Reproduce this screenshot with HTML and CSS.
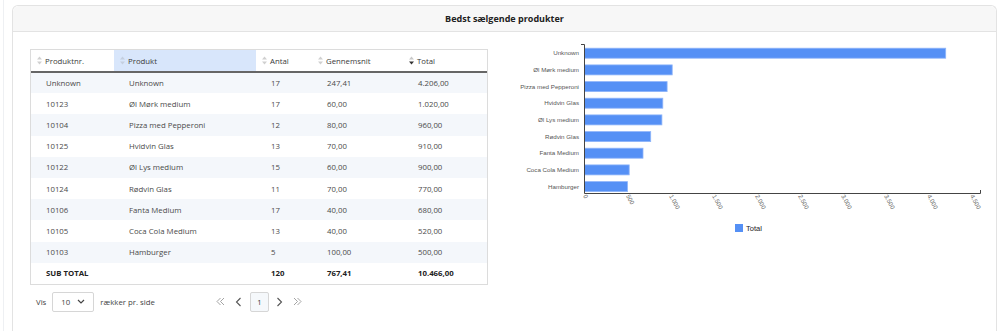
FILE: index.html
```html
<!DOCTYPE html>
<html lang="da">
<head>
<meta charset="utf-8">
<title>Bedst sælgende produkter</title>
<link rel="stylesheet" href="styles.css">
</head>
<body>
<div class="page">
  <div class="card">
    <div class="card-header">Bedst sælgende produkter</div>
    <div class="card-body">
      <div class="table-col">
        <div class="table-wrap">
          <table class="grid">
            <colgroup>
              <col class="c1"><col class="c2"><col class="c3"><col class="c4"><col class="c5">
            </colgroup>
            <thead>
              <tr>
                <th><span class="sort"><svg width="5" height="9" viewBox="0 0 5 9"><path d="M2.5 0.5 L5 3.5 L0 3.5Z" fill="#d0d0d0"/><path d="M0 5.5 L5 5.5 L2.5 8.5Z" fill="#d0d0d0"/></svg></span>Produktnr.</th>
                <th class="active"><span class="sort"><svg width="5" height="9" viewBox="0 0 5 9"><path d="M2.5 0.5 L5 3.5 L0 3.5Z" fill="#c4cfdf"/><path d="M0 5.5 L5 5.5 L2.5 8.5Z" fill="#c4cfdf"/></svg></span>Produkt</th>
                <th><span class="sort"><svg width="5" height="9" viewBox="0 0 5 9"><path d="M2.5 0.5 L5 3.5 L0 3.5Z" fill="#d0d0d0"/><path d="M0 5.5 L5 5.5 L2.5 8.5Z" fill="#d0d0d0"/></svg></span>Antal</th>
                <th><span class="sort"><svg width="5" height="9" viewBox="0 0 5 9"><path d="M2.5 0.5 L5 3.5 L0 3.5Z" fill="#d0d0d0"/><path d="M0 5.5 L5 5.5 L2.5 8.5Z" fill="#d0d0d0"/></svg></span>Gennemsnit</th>
                <th><span class="sort"><svg width="5" height="9" viewBox="0 0 5 9"><path d="M2.5 0.5 L5 3.5 L0 3.5Z" fill="#c8c8c8"/><path d="M0 5.5 L5 5.5 L2.5 8.5Z" fill="#333"/></svg></span>Total</th>
              </tr>
            </thead>
            <tbody>
              <tr class="odd"><td>Unknown</td><td>Unknown</td><td>17</td><td>247,41</td><td>4.206,00</td></tr>
              <tr><td>10123</td><td>Øl Mørk medium</td><td>17</td><td>60,00</td><td>1.020,00</td></tr>
              <tr class="odd"><td>10104</td><td>Pizza med Pepperoni</td><td>12</td><td>80,00</td><td>960,00</td></tr>
              <tr><td>10125</td><td>Hvidvin Glas</td><td>13</td><td>70,00</td><td>910,00</td></tr>
              <tr class="odd"><td>10122</td><td>Øl Lys medium</td><td>15</td><td>60,00</td><td>900,00</td></tr>
              <tr><td>10124</td><td>Rødvin Glas</td><td>11</td><td>70,00</td><td>770,00</td></tr>
              <tr class="odd"><td>10106</td><td>Fanta Medium</td><td>17</td><td>40,00</td><td>680,00</td></tr>
              <tr><td>10105</td><td>Coca Cola Medium</td><td>13</td><td>40,00</td><td>520,00</td></tr>
              <tr class="odd"><td>10103</td><td>Hamburger</td><td>5</td><td>100,00</td><td>500,00</td></tr>
            </tbody>
            <tfoot>
              <tr><td>SUB TOTAL</td><td></td><td>120</td><td>767,41</td><td>10.466,00</td></tr>
            </tfoot>
          </table>
        </div>
        <div class="pager-row">
          <span class="lbl">Vis</span>
          <div class="select"><span>10</span><svg width="8" height="5" viewBox="0 0 8 5"><path d="M1 1 L4 4 L7 1" fill="none" stroke="#444" stroke-width="1.2"/></svg></div>
          <span class="lbl">rækker pr. side</span>
          <div class="pager">
            <span class="pg"><svg width="9" height="9" viewBox="0 0 9 9"><path d="M4.5 1 L1 4.5 L4.5 8 M8 1 L4.5 4.5 L8 8" fill="none" stroke="#999" stroke-width="0.9"/></svg></span>
            <span class="pg"><svg width="7" height="10" viewBox="0 0 7 10"><path d="M5.5 1 L1.5 5 L5.5 9" fill="none" stroke="#555" stroke-width="1.1"/></svg></span>
            <span class="page-num">1</span>
            <span class="pg"><svg width="7" height="10" viewBox="0 0 7 10"><path d="M1.5 1 L5.5 5 L1.5 9" fill="none" stroke="#555" stroke-width="1.1"/></svg></span>
            <span class="pg"><svg width="9" height="9" viewBox="0 0 9 9"><path d="M1 1 L4.5 4.5 L1 8 M4.5 1 L8 4.5 L4.5 8" fill="none" stroke="#999" stroke-width="0.9"/></svg></span>
          </div>
        </div>
      </div>
      <div class="chart-col">
        <svg class="chart" width="490" height="200" viewBox="500 49 490 200">
          <g class="bars" fill="#5590f5" stroke="#8fb5f9" stroke-width="0.8">
            <rect x="584.5" y="48.2" width="361.2" height="10"/>
            <rect x="584.5" y="64.9" width="87.7" height="10"/>
            <rect x="584.5" y="81.6" width="82.6" height="10"/>
            <rect x="584.5" y="98.2" width="78.3" height="10"/>
            <rect x="584.5" y="114.9" width="77.4" height="10"/>
            <rect x="584.5" y="131.6" width="66.2" height="10"/>
            <rect x="584.5" y="148.2" width="58.5" height="10"/>
            <rect x="584.5" y="164.9" width="44.7" height="10"/>
            <rect x="584.5" y="181.6" width="43" height="10"/>
          </g>
          <g class="ylabels" text-anchor="end">
            <text x="579" y="55.4">Unknown</text>
            <text x="579" y="72.1">Øl Mørk medium</text>
            <text x="579" y="88.8">Pizza med Pepperoni</text>
            <text x="579" y="105.4">Hvidvin Glas</text>
            <text x="579" y="122.1">Øl Lys medium</text>
            <text x="579" y="138.8">Rødvin Glas</text>
            <text x="579" y="155.4">Fanta Medium</text>
            <text x="579" y="172.1">Coca Cola Medium</text>
            <text x="579" y="188.8">Hamburger</text>
          </g>
          <g stroke="#444" stroke-width="1" fill="none">
            <path d="M581 44.5 H584.5 V193.5 H980.5 V190"/>
          </g>
          <g class="xlabels">
            <text x="583" y="196" transform="rotate(62 583 196)">0</text>
            <text x="626" y="196" transform="rotate(62 626 196)">500</text>
            <text x="669" y="196" transform="rotate(62 669 196)">1.000</text>
            <text x="712" y="196" transform="rotate(62 712 196)">1.500</text>
            <text x="755" y="196" transform="rotate(62 755 196)">2.000</text>
            <text x="798" y="196" transform="rotate(62 798 196)">2.500</text>
            <text x="841" y="196" transform="rotate(62 841 196)">3.000</text>
            <text x="884" y="196" transform="rotate(62 884 196)">3.500</text>
            <text x="927" y="196" transform="rotate(62 927 196)">4.000</text>
            <text x="970" y="196" transform="rotate(62 970 196)">4.500</text>
          </g>
          <rect x="735" y="224" width="8" height="8" fill="#5590f5"/>
          <text class="legend" x="746" y="231">Total</text>
        </svg>
      </div>
    </div>
  </div>
</div>
</body>
</html>
```

FILE: styles.css
```css
* { box-sizing: border-box; }

html, body {
  margin: 0;
  padding: 0;
  background: #fff;
}

body {
  font-family: "Open Sans", "Noto Sans", "Liberation Sans", sans-serif;
  color: #444;
  overflow: hidden;
}

.page {
  margin-left: 3px;
  border-left: 1px solid #eef0f3;
  height: 331px;
  padding: 5px 7px 0 8px;
}

.card {
  border: 1px solid #e3e3e3;
  border-bottom: 0;
  border-radius: 6px 6px 0 0;
  height: 326px;
  background: #fff;
}

.card-header {
  height: 26px;
  background: #f7f7f7;
  border-bottom: 1px solid #e3e3e3;
  border-radius: 6px 6px 0 0;
  display: flex;
  align-items: center;
  justify-content: center;
  font-weight: 700;
  font-size: 9px;
  color: #222;
}

.card-body {
  display: flex;
  gap: 12px;
  padding: 17px 0 0 17px;
}

.table-col {
  width: 458px;
  flex: none;
}

.table-wrap {
  border: 1px solid #dcdcdc;
}

.grid {
  width: 456px;
  border-collapse: collapse;
  table-layout: fixed;
  font-size: 7.8px;
}

.c1 { width: 83px; }
.c2 { width: 142px; }
.c3 { width: 56px; }
.c4 { width: 91px; }
.c5 { width: 84px; }

.grid th {
  height: 22px;
  text-align: left;
  font-weight: 400;
  color: #3a3a3a;
  padding: 0 0 0 6px;
  border-bottom: 2px solid #666;
  white-space: nowrap;
}

.grid th.active {
  background: #d8e6fb;
}

.sort {
  display: inline-block;
  width: 5px;
  margin-right: 3px;
  vertical-align: -1px;
}

.sort svg { display: block; }

.grid td {
  height: 21.2px;
  padding: 0 0 0 15px;
  color: #4a4a4a;
  white-space: nowrap;
}

.grid tr.odd td {
  background: #f4f7fb;
}

.grid tfoot td {
  font-weight: 700;
  color: #222;
}

.pager-row {
  display: flex;
  align-items: center;
  margin-top: 7px;
  padding-left: 6px;
  font-size: 7.8px;
  color: #444;
}

.lbl { white-space: nowrap; }

.select {
  display: flex;
  align-items: center;
  justify-content: space-between;
  width: 42px;
  height: 20px;
  margin: 0 6px;
  padding: 0 8px 0 8px;
  border: 1px solid #d6d6d6;
  border-radius: 2px;
  background: #fff;
}

.select svg { display: block; }

.pager {
  display: flex;
  align-items: center;
  margin-left: 57px;
}

.pg {
  display: flex;
  align-items: center;
  justify-content: center;
  width: 18px;
  height: 20px;
}

.pg svg { display: block; }

.page-num {
  display: flex;
  align-items: center;
  justify-content: center;
  width: 19px;
  height: 20px;
  margin: 0 2px;
  border: 1px solid #d6d6d6;
  border-radius: 2px;
  background: #f5f8fb;
  color: #333;
  font-size: 7.5px;
}

.chart-col {
  flex: none;
  width: 490px;
}

.chart {
  display: block;
  overflow: visible;
}

.chart text {
  font-family: "Liberation Sans", Arial, sans-serif;
  font-size: 6.2px;
  fill: #555;
}

.chart .xlabels text {
  fill: #666;
}

.chart text.legend {
  font-size: 7.5px;
  fill: #222;
}
```
